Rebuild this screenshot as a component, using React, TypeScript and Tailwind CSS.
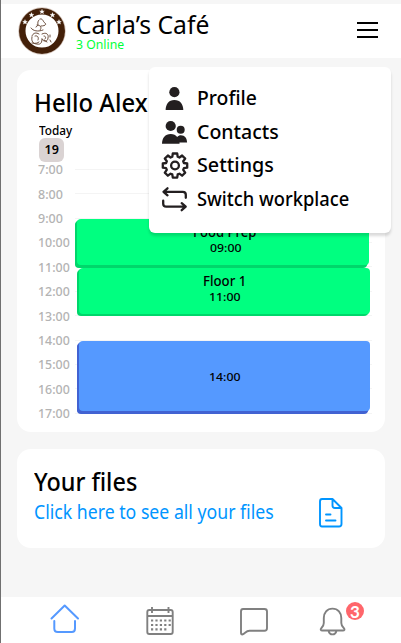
import { useLayoutEffect, useRef, useState, type ReactNode } from "react";

/* Condenses a line of text so that it fills the width of its box. */
function Fit({ className, children }: { className: string; children: ReactNode }) {
  const box = useRef<HTMLDivElement>(null);
  const text = useRef<HTMLSpanElement>(null);
  const [scale, setScale] = useState(1);
  useLayoutEffect(() => {
    if (box.current && text.current) setScale(box.current.clientWidth / text.current.offsetWidth);
  }, []);
  return (
    <div ref={box} className={`shrink-0 whitespace-nowrap ${className}`}>
      <span ref={text} className="inline-block origin-left align-top" style={{ transform: `scaleX(${scale})` }}>
        {children}
      </span>
    </div>
  );
}

function Logo() {
  return (
    <svg className="block size-12 shrink-0" viewBox="0 0 48 48" fill="none">
      <circle cx="24" cy="24" r="19.800" stroke="#432009" strokeWidth="6.600" />
      <circle cx="24" cy="24" r="23.300" stroke="#b69d8c" strokeWidth=".5" />
      {[[7, 15], [13.5, 8], [24, 4.6], [34.5, 8], [41, 15]].map(([x, y]) => (
        <path
          key={x}
          transform={`translate(${x} ${y})`}
          d="M0-2.400.700-.700 2.400-.700 1.100.500 1.600 2.100 0 1.200-1.600 2.100-1.100.500-2.400-.700-.700-.700Z"
          fill="#fff"
          stroke="#fff"
          strokeWidth=".3"
        />
      ))}
      <g stroke="#5b3b28" strokeWidth=".9" strokeLinecap="round">
        <path d="M21 13c-3 3 1 5-3 7m4-8c3-1 3 3 5 4 2 2-1 3-4 3m-10 2c2 3 7 4 12 2m-6-5c4 0 5 3 3 5" />
        <path d="M14 29c1-3 4-4 7-2m-7 3c-1 4 1 7 5 7 4 1 5-2 5-5m-7-3c3-1 4 2 3 4m4-6c4-2 7 0 6 4 0 4-5 4-6 1m2-3c2 0 2 2 1 3m-13 4c3 1 6 0 7-1m5-2 3 2m3-7v2m0 3 1 2" />
      </g>
    </svg>
  );
}

function PersonIcon() {
  return (
    <svg className="block size-7" viewBox="0 0 28 28" fill="#231f20">
      <circle cx="13.400" cy="8.200" r="5.100" />
      <path d="M4.600 26c.2-6 3.100-10 8.800-10s8.700 4 8.900 10Z" />
    </svg>
  );
}

function PeopleIcon() {
  return (
    <svg className="block size-7" viewBox="0 0 28 28" fill="#231f20">
      <circle cx="9.700" cy="8" r="5.100" />
      <circle cx="19.700" cy="11.800" r="4" />
      <path d="M1 25.800c.2-6 3.100-9.800 8.700-9.800 3 0 5 1 6.500 3 1-1.200 2.200-1.700 3.700-1.700 4 0 6 3 6.200 7.200h-7.600v1.300Z" />
    </svg>
  );
}

function GearIcon() {
  return (
    <svg className="block size-7" viewBox="0 0 28 28" fill="none" stroke="#231f20" strokeWidth="2.300" strokeLinejoin="round">
      <circle cx="14" cy="14.500" r="3.900" />
      <path transform="translate(0 .5)" d="M11.800 2h4.400l.5 3.300 1.700.7 2.700-2 3.100 3.100-2 2.700.7 1.700 3.300.5v4.200l-3.300.5-.7 1.700 2 2.700-3.100 3.100-2.700-2-1.700.7-.5 3.300h-4.400l-.5-3.300-1.700-.7-2.700 2-3.100-3.100 2-2.700-.7-1.700-3.300-.5V12l3.300-.5.700-1.700-2-2.700L6.900 4l2.700 2 1.700-.7Z" />
    </svg>
  );
}

function SwitchIcon() {
  return (
    <svg className="block size-7" viewBox="0 0 28 28" fill="none" stroke="#231f20" strokeWidth="2.300" strokeLinecap="round" strokeLinejoin="round">
      <path d="M6.500 3.300 2.500 6.800l4 3.500M2.700 6.800h19.100q3 0 3 3v3M20.700 18.200l4 3.500-4 3.500M24.500 21.700H5.200q-3 0-3-3v-3" />
    </svg>
  );
}

const hours = ["7:00", "8:00", "9:00", "10:00", "11:00", "12:00", "13:00", "14:00", "15:00", "16:00", "17:00"];

const menu = [
  { label: "Profile", icon: <PersonIcon />, width: "w-[60px]" },
  { label: "Contacts", icon: <PeopleIcon />, width: "w-[82px]" },
  { label: "Settings", icon: <GearIcon />, width: "w-[77px]" },
  { label: "Switch workplace", icon: <SwitchIcon />, width: "w-[152px]" },
];

export default function App() {
  return (
    <div className="flex h-[643px] w-[401px] flex-col overflow-hidden border-l border-[#707070] bg-[#f6f6f6] pt-1 font-['Noto_Sans','Open_Sans',sans-serif] text-black">
      <header className="relative flex h-[54px] shrink-0 items-start bg-white pr-[23px] pl-[17px]">
        <div className="pt-[3px]"><Logo /></div>
        <div className="flex flex-1 flex-col pt-[6px] pl-[10px]">
          <Fit className="w-[133px] text-[26px] leading-7">Carla’s Café</Fit>
          <Fit className="w-[48px] text-[12.500px] leading-[14px] text-[#00ff38]">3 Online</Fit>
        </div>
        <button className="mt-[17px] flex h-[18px] w-[21px] flex-col justify-between py-px" aria-label="Menu">
          <span className="block h-0.5 w-full bg-black" />
          <span className="block h-0.5 w-full bg-black" />
          <span className="block h-0.5 w-full bg-black" />
        </button>

        <nav className="absolute top-[63px] left-[148px] z-10 flex h-[166px] w-[242px] flex-col rounded-md bg-white pt-[14px] pl-3 shadow-[0_3px_3px_rgba(0,0,0,0.15)]">
          {menu.map((m) => (
            <div key={m.label} className="flex h-[33.800px] shrink-0 items-center gap-2">
              {m.icon}
              <Fit className={`text-[20px] leading-7 font-medium ${m.width}`}>{m.label}</Fit>
            </div>
          ))}
        </nav>
      </header>

      <main className="flex flex-1 flex-col gap-[17px] pt-3 pr-4 pl-4">
        <section className="h-[362px] rounded-[14px] bg-white">
          <div className="flex h-[87px] flex-col pt-[14px] pl-[17px]">
            <Fit className="w-[114px] text-[26px] leading-9 font-medium">Hello Alex</Fit>
            <Fit className="mt-[3px] ml-[5px] w-[33px] text-[12.500px] leading-[15px] font-medium">Today</Fit>
            <div className="ml-[5px] flex h-6 w-[25px] shrink-0 items-center justify-center rounded-md bg-[#dad3d3] text-[12.500px] font-semibold">
              <Fit className="w-[14px] leading-6">19</Fit>
            </div>
          </div>
          <div className="relative">
            {hours.map((h) => (
              <div key={h} className="flex h-[24.420px] items-center pl-[21px]">
                <Fit className={`pt-px text-[12px] leading-[23px] font-medium text-[#b3b3b3] ${h.length > 4 ? "w-[32px]" : "w-[25px]"}`}>{h}</Fit>
                <div className="mr-[13px] ml-auto h-px w-[297px] bg-[#f4f4f4]" />
              </div>
            ))}
            <div className="absolute top-[62px] left-[60px] flex w-[293px] flex-col text-center">
              <div className="flex h-[46px] w-[292px] flex-col items-center rounded-[4px] bg-[#00ff80] pt-[5px] shadow-[-1px_1px_0_#00d66b,-2px_2px_0_#00d66b,-2px_3px_0_#00d66b]">
                <Fit className="ml-[3px] w-[63px] text-[13.500px] leading-4 font-medium">Food Prep</Fit>
                <Fit className="ml-[3px] w-[31px] text-[11.500px] leading-4 font-medium">09:00</Fit>
              </div>
              <div className="mt-[3px] ml-[2px] flex h-[46px] w-[291px] flex-col items-center rounded-[4px] bg-[#00ff80] pt-[5px] pr-[2px] shadow-[-1px_1px_0_#00d66b,-2px_2px_0_#00d66b]">
                <Fit className="ml-px w-[43px] text-[13.500px] leading-4 font-medium">Floor 1</Fit>
                <Fit className="w-[31px] text-[11.500px] leading-4 font-medium">11:00</Fit>
              </div>
              <div className="mt-[27px] ml-[2px] flex h-[70px] w-[291px] flex-col items-center justify-center rounded-[4px] bg-[#5599ff] pt-[2px] pr-[2px] shadow-[-1px_1px_0_#4162d2,-2px_2px_0_#4162d2,-2px_3px_0_#4162d2]">
                <Fit className="w-[31px] text-[11.500px] leading-4 font-medium">14:00</Fit>
              </div>
            </div>
          </div>
        </section>

        <section className="flex h-[99px] items-start rounded-[14px] bg-white pt-[14px] pl-[17px]">
          <div className="w-[284px]">
            <Fit className="w-[103px] text-[25px] leading-9 font-medium">Your files</Fit>
            <Fit className="w-[240px] text-[19px] leading-[26px] text-[#0095ff]">Click here to see all your files</Fit>
          </div>
          <svg className="mt-[34px] block h-[31px] w-[26px]" viewBox="0 0 26 31" fill="none" stroke="#0095ff" strokeWidth="1.900" strokeLinecap="round" strokeLinejoin="round">
            <path d="M4 2h10.500l9 9V27q0 2.500-2.500 2.500H4Q2 29.500 2 27V4.500Q2 2 4 2ZM14.500 2v6.500q0 2.500 2.500 2.500h6.500M8 17.500h4.500M8 23.500h9.500" />
          </svg>
        </section>
      </main>

      <footer className="flex h-[46px] shrink-0 items-start bg-white pl-[48px]">
        <svg className="mt-[6px] block h-[31px] w-[32px]" viewBox="0 0 32 31" fill="none" stroke="#5599ff" strokeWidth="2" strokeLinecap="round" strokeLinejoin="round">
          <path d="M2.500 15.500 15.700 2.500 29 15.500M5.300 18v7.500q0 3.500 3.500 3.500h14q3.200 0 3.200-3.500V18" />
        </svg>
        <svg className="mt-[9px] ml-[64px] block h-[30px] w-[30px]" viewBox="0 0 30 30" fill="none" stroke="#808080" strokeWidth="1.900">
          <rect x="2.300" y="4" width="25.400" height="24" rx="2" />
          <path d="M2.500 10h25M7 1v6M23.500 1v6" />
          <path d="M6 14.500h20M6 19h20M6 23.300h16" strokeDasharray="2.200 2.200" strokeWidth="2.200" />
        </svg>
        <svg className="mt-[10px] ml-[64px] block h-[30px] w-[30px]" viewBox="0 0 30 30" fill="none" stroke="#808080" strokeWidth="1.900" strokeLinejoin="round">
          <path d="M4 2h21.500q2.500 0 2.500 2.500V21q0 2.800-2.500 2.800H10.500c-3 0-3.700 1.500-6 3.100-1.500 1-2.500.6-2.500-1V4.500Q2 2 4 2Z" />
        </svg>
        <div className="relative mt-[9px] ml-[50px] h-[30px] w-[28px]">
          <svg className="block h-[30px] w-[28px]" viewBox="0 0 28 30" fill="none" stroke="#808080" strokeWidth="1.900" strokeLinejoin="round">
            <path d="M13.500 2.600C8 2.600 4.800 6.800 4.800 12v5c0 2.300-.8 3.600-2.500 5.200-1.200 1.300-.5 2.300 1 2.300h20.600c1.500 0 2.200-1 1-2.300-1.800-1.600-2.600-2.900-2.600-5.200v-5c0-5.200-3.300-9.400-8.800-9.400ZM9.500 24.700c.6 2.600 2.100 3.700 4 3.700s3.400-1.100 4-3.700" />
          </svg>
          <div className="absolute -top-[4px] left-[27px] flex size-[18px] items-center justify-center rounded-full bg-[#ff666b] font-['Lato',sans-serif] text-[17px] leading-none font-bold text-white">3</div>
        </div>
      </footer>
    </div>
  );
}
